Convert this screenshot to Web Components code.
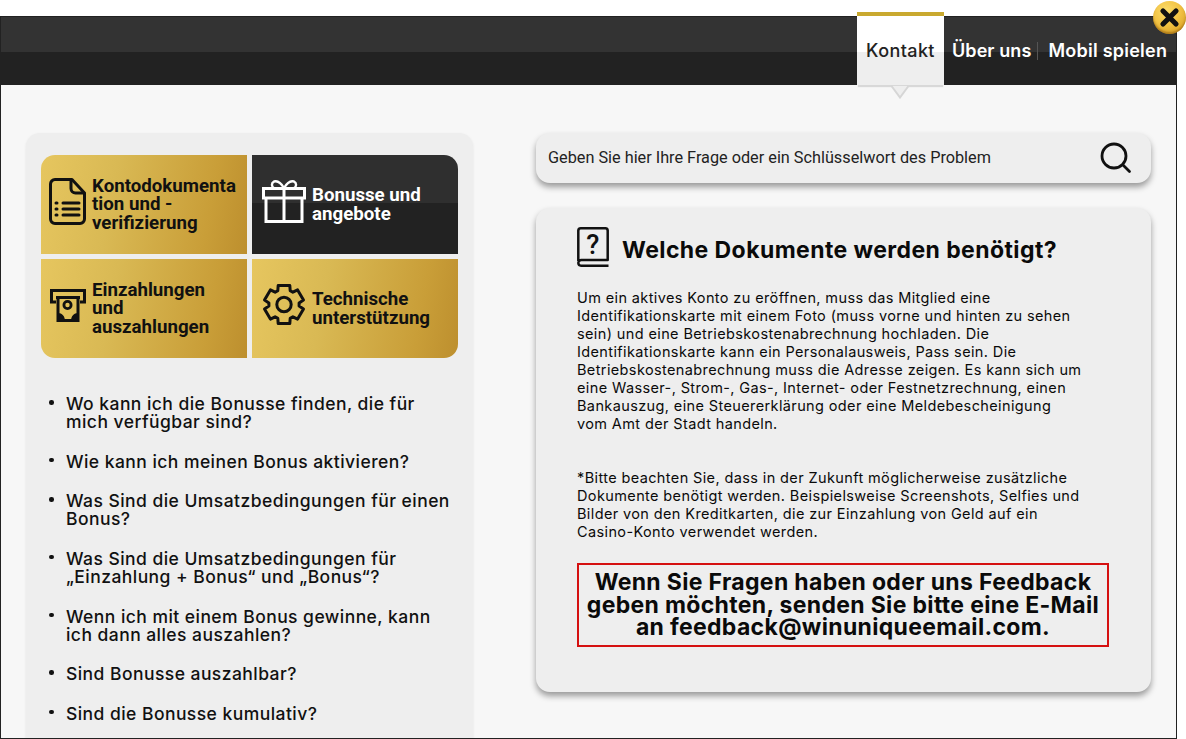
<!DOCTYPE html>
<html lang="de"><head><meta charset="utf-8"><title>Kontakt</title>
<style>
html,body{margin:0;padding:0;height:739px;overflow:hidden;background:#fff;font-family:"Inter","Liberation Sans",sans-serif}
</style></head><body>
<win-frame>
  <win-header slot="header">
    <nav-tab active>Kontakt</nav-tab>
    <nav-tab sep>Über uns</nav-tab>
    <nav-tab last>Mobil spielen</nav-tab>
  </win-header>
  <side-panel slot="left">
    <tile-grid>
      <cat-tile icon="doc" pos="tl">Kontodokumenta<br>tion und -<br>verifizierung</cat-tile>
      <cat-tile icon="gift" pos="tr" dark>Bonusse und<br>angebote</cat-tile>
      <cat-tile icon="atm" pos="bl">Einzahlungen<br>und<br>auszahlungen</cat-tile>
      <cat-tile icon="gear" pos="br">Technische<br>unterstützung</cat-tile>
    </tile-grid>
    <faq-list>
      <faq-item>Wo kann ich die Bonusse finden, die für<br>mich verfügbar sind?</faq-item>
      <faq-item>Wie kann ich meinen Bonus aktivieren?</faq-item>
      <faq-item>Was Sind die Umsatzbedingungen für einen<br>Bonus?</faq-item>
      <faq-item>Was Sind die Umsatzbedingungen für<br>„Einzahlung + Bonus“ und „Bonus“?</faq-item>
      <faq-item>Wenn ich mit einem Bonus gewinne, kann<br>ich dann alles auszahlen?</faq-item>
      <faq-item>Sind Bonusse auszahlbar?</faq-item>
      <faq-item>Sind die Bonusse kumulativ?</faq-item>
    </faq-list>
  </side-panel>
  <search-box slot="right">Geben Sie hier Ihre Frage oder ein Schlüsselwort des Problem</search-box>
  <article-card slot="right">
    <span slot="title">Welche Dokumente werden benötigt?</span>
    <p>Um ein aktives Konto zu eröffnen, muss das Mitglied eine<br>Identifikationskarte mit einem Foto (muss vorne und hinten zu sehen<br>sein) und eine Betriebskostenabrechnung hochladen. Die<br>Identifikationskarte kann ein Personalausweis, Pass sein. Die<br>Betriebskostenabrechnung muss die Adresse zeigen. Es kann sich um<br>eine Wasser-, Strom-, Gas-, Internet- oder Festnetzrechnung, einen<br>Bankauszug, eine Steuererklärung oder eine Meldebescheinigung<br>vom Amt der Stadt handeln.</p>
    <p>*Bitte beachten Sie, dass in der Zukunft möglicherweise zusätzliche<br>Dokumente benötigt werden. Beispielsweise Screenshots, Selfies und<br>Bilder von den Kreditkarten, die zur Einzahlung von Geld auf ein<br>Casino-Konto verwendet werden.</p>
    <span slot="notice">Wenn Sie Fragen haben oder uns Feedback<br>geben möchten, senden Sie bitte eine E-Mail<br>an feedback@winuniqueemail.com.</span>
  </article-card>
  <close-button></close-button>
</win-frame>
<script>
const mk=(name,html)=>customElements.define(name,class extends HTMLElement{
  constructor(){super();const r=this.attachShadow({mode:'open'});r.innerHTML=typeof html==='function'?html(this):html;}
});
mk('win-frame',`<style>
:host{display:block;box-sizing:border-box;width:1177px;height:723px;margin-top:16px;border:1px solid #222;background:#f7f7f7;position:relative}
.body{display:flex;align-items:flex-start;padding:48px 25px 0 25px;height:653px;box-sizing:border-box;overflow:hidden;gap:63px}
.r{display:flex;flex-direction:column;gap:25px;width:615px}
</style><slot name="header"></slot><div class="body"><slot name="left"></slot><div class="r"><slot name="right"></slot></div></div><slot></slot>`);
mk('win-header',`<style>
:host{display:flex;height:68px;background:linear-gradient(#333 0,#333 35px,#222 35px,#222 100%);padding-left:856px;align-items:stretch;box-sizing:border-box;position:relative;z-index:2}
</style><slot></slot>`);
mk('nav-tab',el=>`<style>
:host{display:flex;align-items:center;color:#fff;font:600 18px/22px "Inter","Liberation Sans",sans-serif;white-space:nowrap;padding:0 0 0 8px;position:relative;height:68px}
:host([sep]){padding-right:7px;letter-spacing:.08px}
:host([last]){padding-left:10px;letter-spacing:.25px}
:host([sep])::after{content:"";position:absolute;right:0;top:25px;height:18px;width:1px;background:#555}
:host([active]){box-sizing:border-box;width:87px;height:73px;margin-top:-5px;padding:0;justify-content:center;color:#222;font-weight:500;letter-spacing:.4px;border-top:4px solid #c9a92f;background:linear-gradient(#fff 0,#fff 36px,#eee 36px,#eee 100%);box-shadow:0 3px 1px -1px #d8d8d8}
svg{position:absolute;left:33px;top:69px;display:block}
</style><slot></slot>${el.hasAttribute('active')?'<svg width="20" height="14" viewBox="0 0 20 14"><path d="M1.500 1 10 12.500 18.500 1" fill="#eeeeee" stroke="#d6d6d6" stroke-width="2"/></svg>':''}`);
mk('close-button',`<style>
:host{display:block;position:absolute;right:-10px;top:-16px;width:33px;height:33px;border-radius:50%;background:radial-gradient(circle at 40% 30%,#fbdc6a 0,#f2c344 45%,#cf9318 100%);box-shadow:inset 0 -2px 2px rgba(120,70,0,.45);z-index:3}
svg{display:block}
</style><svg width="33" height="33" viewBox="0 0 33 33"><path d="M10 10 23 23M23 10 10 23" stroke="#111" stroke-width="5.200" stroke-linecap="round"/></svg>`);
mk('side-panel',`<style>
:host{display:block;box-sizing:border-box;width:447px;flex:none;height:700px;background:#eee;border-radius:14px;padding:22px 15px 0;box-shadow:0 1px 3px rgba(0,0,0,.08)}
</style><slot></slot>`);
mk('tile-grid',`<style>
:host{display:grid;grid-template-columns:206px 206px;grid-template-rows:99px 99px;gap:5px}
</style><slot></slot>`);
const gearPath=(()=>{const cx=22,cy=21.5,pt=(a,r)=>[(cx+r*Math.cos(a*Math.PI/180)).toFixed(1),(cy+r*Math.sin(a*Math.PI/180)).toFixed(1)].join(' ');let d='';
for(let k=0;k<6;k++){const t=-90+k*60;d+=(k?'L':'M')+pt(t-17,20)+'L'+pt(t+17,20)+'L'+pt(t+24,15.2)+'L'+pt(t+36,15.2);}return d+'Z';})();
const icons={
doc:`<svg width="37" height="48" viewBox="0 0 37 48" fill="none" stroke="#111" stroke-width="3" stroke-linecap="round" stroke-linejoin="round"><path d="M6 1.500H23L35.500 15V41a4.500 4.500 0 0 1-4.500 4.500H6A4.500 4.500 0 0 1 1.500 41V6A4.500 4.500 0 0 1 6 1.500Z"/><path d="M22 2V10.500a4.500 4.500 0 0 0 4.500 4.500H35"/><path d="M14 25H30M14 31H30M14 37H30"/><path d="M7 25H8M7 31H8M7 37H8"/></svg>`,
gift:`<svg width="44" height="44" viewBox="0 0 44 44" fill="none" stroke="#fff" stroke-width="3"><path d="M1.500 8.500H42.500V18H1.500ZM4 18V41.500H40V18M22 8.500V42"/><path d="M22 8C19 3 15 .5 12 1.500 9 3 9.500 7 12 8M22 8C25 3 29 .5 32 1.500 35 3 34.500 7 32 8" stroke-width="2.400"/></svg>`,
atm:`<svg width="36" height="34" viewBox="0 0 36 34" fill="none" stroke="#111" stroke-width="3" stroke-linejoin="miter"><path d="M6 13H1.500V1.500H34.500V13H30"/><path d="M6 8.500H30"/><path d="M8 8V31.500H28V8"/><circle cx="17.500" cy="16" r="3.600" stroke-width="2.800"/><path d="M8 32V24C12 24 15 27 15 32ZM28 32V24C24 24 21 27 21 32Z" fill="#111" stroke="none"/></svg>`,
gear:`<svg width="44" height="44" viewBox="0 0 44 44" fill="none" stroke="#111" stroke-width="3" stroke-linejoin="round"><path d="${gearPath}"/><circle cx="22" cy="21.500" r="7.200"/></svg>`};
mk('cat-tile',el=>{const p=el.getAttribute('pos');const r={tl:'14px 0 0 0',tr:'0 14px 0 0',bl:'0 0 0 14px',br:'0 0 14px 0'}[p];
const dark=el.hasAttribute('dark');const ic=el.getAttribute('icon');
const l={doc:8,gift:10,atm:9,gear:10}[ic], w={doc:43,gift:50,atm:42,gear:50}[ic], up={doc:6,gift:5,atm:6,gear:8}[ic];
return `<style>
:host{display:flex;align-items:center;box-sizing:border-box;border-radius:${r};padding-left:${l}px;color:${dark?'#fff':'#111'};font:700 18.700px/18.500px "Roboto","Liberation Sans",sans-serif;background:${dark?'linear-gradient(#2f2f2f 0,#2f2f2f 48px,#222 48px,#222 100%)':'linear-gradient(100deg,#e6c65f 0,#d9b954 35%,#c99e38 80%,#bd8f2e 100%)'}}
.i{width:${w}px;flex:none;display:flex;align-items:center;padding-bottom:${up}px}
.t{white-space:nowrap}
</style><div class="i">${icons[ic]}</div><div class="t"><slot></slot></div>`;});
mk('faq-list',`<style>
:host{display:flex;flex-direction:column;gap:21.670px;padding:37px 0 0 6px}
</style><slot></slot>`);
mk('faq-item',`<style>
:host{display:block;position:relative;padding-left:19px;color:#111;font:500 17.500px/18px "Inter","Liberation Sans",sans-serif;letter-spacing:.45px;white-space:nowrap}
:host::before{content:"";position:absolute;left:2px;top:5px;width:4.500px;height:4.500px;border-radius:50%;background:#111}
</style><slot></slot>`);
mk('search-box',`<style>
:host{display:flex;align-items:center;justify-content:space-between;box-sizing:border-box;height:50px;padding:0 19px 0 12px;background:#eee;border-radius:14px;color:#222;font:400 16.250px/20px "Roboto","Liberation Sans",sans-serif;box-shadow:0 4px 6px rgba(0,0,0,.38)}
</style><slot></slot><svg width="32" height="32" viewBox="0 0 32 32" fill="none" stroke="#111" stroke-width="2.800" stroke-linecap="round"><circle cx="14" cy="14" r="12"/><path d="M23 23 29.500 29.500"/></svg>`);
mk('article-card',`<style>
:host{display:block;box-sizing:border-box;height:484px;background:#eee;border-radius:14px;padding:19px 42px 0 41px;box-shadow:0 4px 6px rgba(0,0,0,.38);color:#0a0a0a}
.h{display:flex;align-items:center;gap:13px;font:700 23px/26px "Inter","Liberation Sans",sans-serif;letter-spacing:.42px;height:40px;white-space:nowrap}
.h .tt{padding-top:6px}
.b{margin-top:22px;font:400 14.500px/18px "Inter","Liberation Sans",sans-serif;letter-spacing:.38px;white-space:nowrap}
::slotted(p){margin:0 0 36px;}
.n{box-sizing:border-box;margin-top:-14px;height:84px;border:2px solid #d51010;display:flex;align-items:center;justify-content:center;text-align:center;font:700 23px/22.500px "Inter","Liberation Sans",sans-serif;letter-spacing:.33px;white-space:nowrap}
</style><div class="h"><svg width="32" height="40" viewBox="0 0 32 40" fill="none" stroke="#111" stroke-width="2.500" stroke-linejoin="round"><path d="M1.300 34V3.500A2.500 2.500 0 0 1 3.800 1.300H28A2.500 2.500 0 0 1 30.700 3.500V33H4.500A3 3 0 0 0 1.300 36 3 3 0 0 0 4.500 38.700H31.500"/><text x="16" y="27" text-anchor="middle" font-family="Roboto" font-weight="500" font-size="27" fill="#111" stroke="none">?</text></svg><div class="tt"><slot name="title"></slot></div></div><div class="b"><slot></slot></div><div class="n"><slot name="notice"></slot></div>`);
</script>
</body></html>
